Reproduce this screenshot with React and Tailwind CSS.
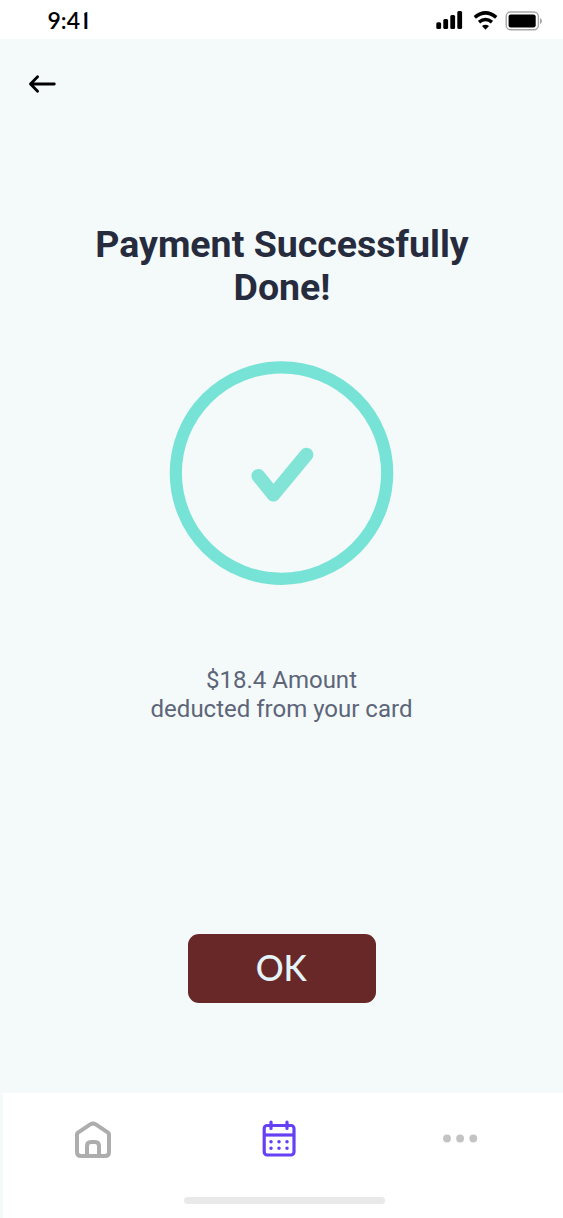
function StatusBar() {
  return (
    <header className="flex h-[39px] shrink-0 items-center bg-white pl-[47.5px] pr-[20px] text-black">
      <div className="flex h-6 items-baseline font-['Lato',sans-serif] text-[23px] font-semibold leading-6">
        <span>9:4</span>
        <span className="font-['Roboto',sans-serif] font-semibold text-[24px] [clip-path:inset(0_0_0_46%)] -ml-[2px]">1</span>
      </div>
      <svg className="ml-auto" width="108" height="24" viewBox="435 9 108 24" fill="none">
        <g fill="#000">
          <rect x="436.3" y="23.3" width="4.8" height="6.7" rx="1.5" />
          <rect x="443.3" y="20" width="4.8" height="10" rx="1.5" />
          <rect x="450.3" y="16" width="4.8" height="14" rx="1.5" />
          <rect x="457.3" y="12" width="4.8" height="18" rx="1.5" />
        </g>
        <path d="M474.8 18.3Q485.5 9.4 496.2 18.3" stroke="#000" strokeWidth="3.6" />
        <path d="M479 23.1Q485.5 17.7 492 23.1" stroke="#000" strokeWidth="3.4" />
        <path d="M482 27.1Q485.5 24.2 489 27.1L485.5 30.8Z" fill="#000" />
        <rect x="506.2" y="13" width="32.2" height="17.8" rx="4.5" stroke="#a6a6a6" strokeWidth="1.4" />
        <rect x="508.6" y="15.4" width="27.1" height="13" rx="2.2" fill="#000" />
        <path d="M540 18.9Q542 19.7 542 21.9T540 25.1Z" fill="#a6a6a6" />
      </svg>
    </header>
  );
}

function SuccessMark() {
  return (
    <svg className="mt-[51px] shrink-0" width="226" height="226" viewBox="168.5 360 226 226" fill="none">
      <circle cx="281" cy="473.1" r="105.7" stroke="#76e3d6" strokeWidth="12.2" />
      <path d="M257.8 475.9L272.9 494.7L306 454.6" stroke="#82e3d7" strokeWidth="13.8" strokeLinecap="round" strokeLinejoin="round" />
    </svg>
  );
}

function TabBar() {
  return (
    <nav className="ml-[3px] flex h-[125px] shrink-0 flex-col items-center bg-white">
      <div className="flex w-full items-start pl-[69px] pt-[24px]">
        <button aria-label="Home">
          <svg width="42" height="44" viewBox="72 1117 42 44" fill="none" stroke="#adadad" strokeWidth="4" strokeLinejoin="round">
            <path d="M77 1134.5Q77 1133.4 78 1132.6L90.6 1124.2Q93 1122.8 95.4 1124.2L108 1132.6Q109 1133.4 109 1134.5V1152Q109 1156 105 1156H81Q77 1156 77 1152Z" />
            <path d="M87 1156V1146Q87 1142 91 1142H95Q99 1142 99 1146V1156" />
          </svg>
        </button>
        <button aria-label="Calendar" className="ml-[144px]">
          <svg width="42" height="44" viewBox="258 1117 42 44" fill="none" stroke="#6540f5" strokeWidth="3.2">
            <rect x="264.2" y="1125.5" width="29.8" height="29.5" rx="3" />
            <path d="M264 1135H294" />
            <path d="M271 1122V1128.5M287 1122V1128.5" strokeLinecap="round" />
            <path d="M271 1141.7H271.01M279 1141.7H279.01M287 1141.7H287.01M271 1148.3H271.01M279 1148.3H279.01M287 1148.3H287.01" strokeWidth="3.5" strokeLinecap="round" />
          </svg>
        </button>
        <button aria-label="More" className="ml-[139px]">
          <svg width="42" height="44" viewBox="439 1117 42 44" fill="#c3c3c3">
            <circle cx="447" cy="1138.5" r="3.9" />
            <circle cx="460.1" cy="1138.5" r="3.9" />
            <circle cx="473.3" cy="1138.5" r="3.9" />
          </svg>
        </button>
      </div>
      <div className="mb-[14px] ml-[181px] mt-auto h-[7px] w-[201px] self-start rounded-full bg-[#e9e9e9]" />
    </nav>
  );
}

export default function App() {
  return (
    <div className="flex h-[1218px] w-[563px] flex-col overflow-hidden bg-[#f4fafa]">
      <StatusBar />
      <main className="flex flex-1 flex-col items-center">
        <button aria-label="Back" className="ml-[27px] mt-[33px] self-start">
          <svg width="30" height="24" viewBox="27 72 30 24" fill="none" stroke="#000" strokeWidth="2.8" strokeLinecap="round" strokeLinejoin="round">
            <path d="M54.3 84H30.5M37.6 76.8L30.5 84L37.6 91.2" />
          </svg>
        </button>
        <h1 className="mt-[127px] w-[421px] pl-px text-center font-['Roboto',sans-serif] text-[37.5px] font-bold leading-[43px] text-[#262c3e]">
          Payment Successfully
          <br />
          Done!
        </h1>
        <SuccessMark />
        <p className="mt-[80px] text-center font-['Roboto',sans-serif] text-[24px] leading-[28.5px] text-[#5d6579]">
          $18.4 Amount
          <br />
          deducted from your card
        </p>
        <button className="mt-[211.4px] h-[69px] w-[188px] shrink-0 rounded-[11px] bg-[#672827] pb-[4px] font-['Lato',sans-serif] text-[37px] font-medium leading-none text-[#e3f4fb]">
          <span className="inline-block scale-x-[0.94]">OK</span>
        </button>
      </main>
      <TabBar />
    </div>
  );
}
